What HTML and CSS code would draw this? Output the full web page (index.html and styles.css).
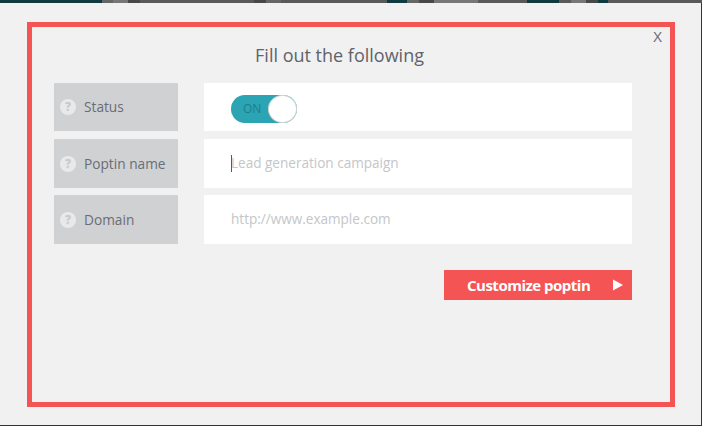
FILE: index.html
```html
<!DOCTYPE html>
<html lang="en">
<head>
<meta charset="utf-8">
<title>Fill out the following</title>
<link rel="stylesheet" href="styles.css">
</head>
<body>
<div class="strip">
  <i class="seg teal w102"></i><i class="seg mid w11"></i><i class="seg light w15"></i><i class="seg dark w12"></i><i class="seg base w114"></i><i class="seg dark w12"></i><i class="seg mid w15"></i><i class="seg base w106"></i><i class="seg teal w20"></i><i class="seg mid w12"></i><i class="seg dark w15"></i><i class="seg light w44"></i><i class="seg base w49"></i><i class="seg teal w32"></i><i class="seg base w12"></i><i class="seg light w15"></i><i class="seg dark w12"></i><i class="seg teal w10"></i><i class="seg base fill"></i>
</div>
<div class="modal">
  <div class="frame">
    <span class="close">X</span>
    <h1 class="title">Fill out the following</h1>
    <div class="row row-first">
      <div class="label"><span class="help">?</span><span class="label-text">Status</span></div>
      <div class="field">
        <div class="toggle"><span class="toggle-text">ON</span><span class="knob"></span></div>
      </div>
    </div>
    <div class="row row-second">
      <div class="label"><span class="help">?</span><span class="label-text">Poptin name</span></div>
      <div class="field"><span class="caret"></span><span class="placeholder">Lead generation campaign</span></div>
    </div>
    <div class="row row-third">
      <div class="label"><span class="help">?</span><span class="label-text">Domain</span></div>
      <div class="field"><span class="placeholder">http://www.example.com</span></div>
    </div>
    <div class="actions">
      <button class="cta" type="button"><span>Customize poptin</span>
        <svg class="cta-arrow" width="10" height="12" viewBox="0 0 10 12"><path d="M0 0.5 L10 6 L0 11.5 Z" fill="#fff"/></svg>
      </button>
    </div>
  </div>
</div>
</body>
</html>
```
FILE: styles.css
```css
* { box-sizing: border-box; }
html, body { margin: 0; padding: 0; height: 100%; overflow: hidden; }
body { background: #333; font-family: "Open Sans", "Noto Sans", sans-serif; color: #666a73; }

.strip { display: flex; height: 3px; background: #595959; }
.seg { display: block; height: 100%; flex: none; }
.teal { background: #0f3a40; }
.mid { background: #666; }
.light { background: #777; }
.dark { background: #484848; }
.base { background: #595959; }
.w102 { width: 102px; } .w11 { width: 11px; } .w15 { width: 15px; } .w12 { width: 12px; }
.w114 { width: 114px; } .w106 { width: 106px; } .w20 { width: 20px; } .w44 { width: 44px; }
.w49 { width: 49px; } .w32 { width: 32px; } .w10 { width: 10px; }
.fill { flex: 1; }

.modal { width: 701px; height: 422px; background: #f1f1f1; padding: 19px 0 0 27px; }
.frame { position: relative; width: 648px; height: 385px; border: 5px solid #f45554; padding: 13px 0 0 22px; }

.close { position: absolute; top: 0; right: 8px; font-size: 15px; line-height: 18px; color: #666a73; }
.title { margin: 0; width: 571px; text-align: center; font-size: 18px; font-weight: 400; line-height: 30px; height: 43px; color: #5f636b; }

.row { display: flex; gap: 26px; }
.row-first { height: 48px; }
.row-second { height: 49px; margin-top: 8px; }
.row-third { height: 49px; margin-top: 7px; }

.label { width: 124px; background: #d0d1d3; display: flex; align-items: center; padding-left: 6px; gap: 8px; font-size: 13.7px; color: #6a6d76; }
.label-text { margin-top: -1px; }
.help { width: 16px; height: 16px; border-radius: 50%; background: #e9e9ea; color: #c9cacc; font-size: 12px; font-weight: 800; line-height: 16px; text-align: center; flex: none; }

.field { width: 428px; background: #fff; display: flex; align-items: center; padding-left: 27px; font-size: 13.55px; position: relative; }
.placeholder { color: #c4c6c9; margin-top: -2px; }
.caret { position: absolute; left: 27px; top: 16px; width: 1px; height: 17px; background: #555a68; }

.toggle { width: 66px; height: 28px; margin-top: 3px; background: #2ba4b3; border-radius: 14px; position: relative; font-size: 12px; line-height: 28px; color: #1f7e8b; padding-left: 12px; }
.toggle-text { display: block; }
.knob { position: absolute; right: 0; top: 0; width: 29px; height: 28px; border-radius: 50%; background: #fff; border: 1px solid #d4d4d4; }

.actions { margin-top: 26px; width: 578px; display: flex; justify-content: flex-end; }
.cta { width: 188px; height: 30px; border: 0; padding: 0 9px 0 23px; background: #f45554; color: #fff; font-family: inherit; font-size: 15px; letter-spacing: -0.5px; font-weight: 700; display: flex; align-items: center; justify-content: space-between; }
.cta-arrow { flex: none; }
```
